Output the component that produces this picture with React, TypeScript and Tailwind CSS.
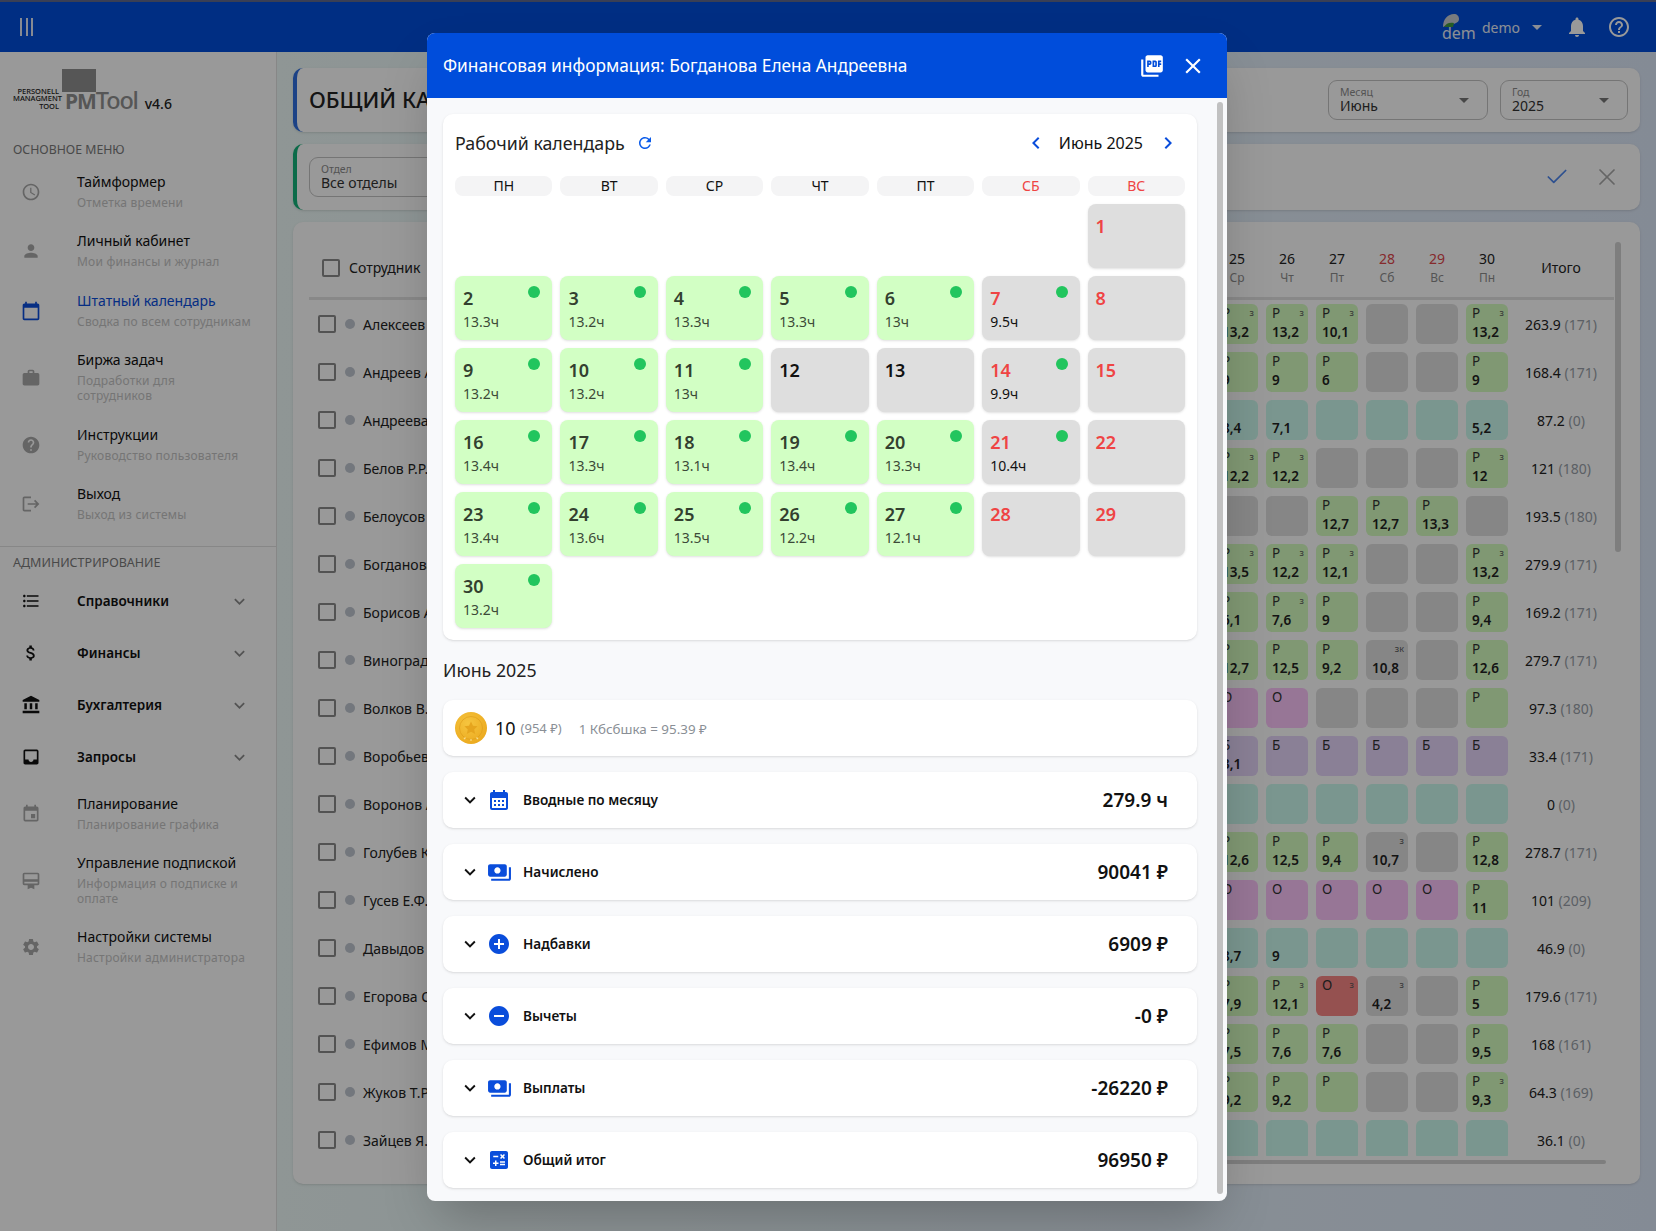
import type { ReactNode } from 'react';
import {
  MdAccessTime, MdPerson, MdCalendarToday, MdWork, MdHelp, MdLogout, MdFormatListBulleted, MdAttachMoney,
  MdAccountBalance, MdInbox, MdEvent, MdCardMembership, MdSettings, MdPictureAsPdf, MdClose, MdRefresh,
  MdChevronLeft, MdChevronRight, MdExpandMore, MdCalendarMonth, MdPayments, MdAddCircle, MdRemoveCircle,
  MdCalculate, MdArrowDropDown, MdNotifications, MdHelpOutline,
} from 'react-icons/md';
import { Check as CheckIcon, X } from 'lucide-react';

type Tone = 'g' | 'o' | 't' | 'p' | 'l' | 'r';
type Cell = [Tone, string?, string?, string?];

const toneClass: Record<Tone, string> = {
  g: 'bg-[#d5fdc0]',
  o: 'bg-[#e0e0e0]',
  t: 'bg-[#ccfbee]',
  p: 'bg-[#fcc5fb]',
  l: 'bg-[#e6d5fb]',
  r: 'bg-[#f98785]',
};

const off: Cell = ['o'];
const teal: Cell = ['t'];

const rows: { name: string; cells: Cell[]; total: string; norm: string }[] = [
  { name: 'Алексеев', cells: [['g', 'Р', '13,2', 'з'], ['g', 'Р', '13,2', 'з'], ['g', 'Р', '10,1', 'з'], off, off, ['g', 'Р', '13,2', 'з']], total: '263.9', norm: '(171)' },
  { name: 'Андреев А', cells: [['g', 'Р', '9'], ['g', 'Р', '9'], ['g', 'Р', '6'], off, off, ['g', 'Р', '9']], total: '168.4', norm: '(171)' },
  { name: 'Андреева', cells: [['t', '', '8,4'], ['t', '', '7,1'], teal, teal, teal, ['t', '', '5,2']], total: '87.2', norm: '(0)' },
  { name: 'Белов Р.Р.', cells: [['g', 'Р', '12,2', 'з'], ['g', 'Р', '12,2', 'з'], off, off, off, ['g', 'Р', '12', 'з']], total: '121', norm: '(180)' },
  { name: 'Белоусов', cells: [off, off, ['g', 'Р', '12,7'], ['g', 'Р', '12,7'], ['g', 'Р', '13,3'], off], total: '193.5', norm: '(180)' },
  { name: 'Богданова', cells: [['g', 'Р', '13,5', 'з'], ['g', 'Р', '12,2', 'з'], ['g', 'Р', '12,1', 'з'], off, off, ['g', 'Р', '13,2', 'з']], total: '279.9', norm: '(171)' },
  { name: 'Борисов А', cells: [['g', 'Р', '6,1'], ['g', 'Р', '7,6', 'з'], ['g', 'Р', '9'], off, off, ['g', 'Р', '9,4']], total: '169.2', norm: '(171)' },
  { name: 'Виноград', cells: [['g', 'Р', '12,7'], ['g', 'Р', '12,5'], ['g', 'Р', '9,2'], ['o', '', '10,8', 'зк'], off, ['g', 'Р', '12,6']], total: '279.7', norm: '(171)' },
  { name: 'Волков В.', cells: [['p', 'О'], ['p', 'О'], off, off, off, ['g', 'Р']], total: '97.3', norm: '(180)' },
  { name: 'Воробьев', cells: [['l', 'Б', '3,1'], ['l', 'Б'], ['l', 'Б'], ['l', 'Б'], ['l', 'Б'], ['l', 'Б']], total: '33.4', norm: '(171)' },
  { name: 'Воронов А', cells: [teal, teal, teal, teal, teal, teal], total: '0', norm: '(0)' },
  { name: 'Голубев К', cells: [['g', 'Р', '12,6'], ['g', 'Р', '12,5'], ['g', 'Р', '9,4'], ['o', '', '10,7', 'з'], off, ['g', 'Р', '12,8']], total: '278.7', norm: '(171)' },
  { name: 'Гусев Е.Ф.', cells: [['p', 'О'], ['p', 'О'], ['p', 'О'], ['p', 'О'], ['p', 'О'], ['g', 'Р', '11']], total: '101', norm: '(209)' },
  { name: 'Давыдов', cells: [['t', '', '8,7'], ['t', '', '9'], teal, teal, teal, teal], total: '46.9', norm: '(0)' },
  { name: 'Егорова С', cells: [['g', 'Р', '7,9'], ['g', 'Р', '12,1', 'з'], ['r', 'О', '', 'з'], ['o', '', '4,2', 'з'], off, ['g', 'Р', '5']], total: '179.6', norm: '(171)' },
  { name: 'Ефимов М', cells: [['g', 'Р', '7,5'], ['g', 'Р', '7,6'], ['g', 'Р', '7,6'], off, off, ['g', 'Р', '9,5']], total: '168', norm: '(161)' },
  { name: 'Жуков Т.Р', cells: [['g', 'Р', '9,2'], ['g', 'Р', '9,2'], ['g', 'Р'], off, off, ['g', 'Р', '9,3', 'з']], total: '64.3', norm: '(169)' },
  { name: 'Зайцев Я.', cells: [teal, teal, teal, teal, teal, teal], total: '36.1', norm: '(0)' },
];

const days = [
  ['25', 'Ср'], ['26', 'Чт'], ['27', 'Пт'], ['28', 'Сб'], ['29', 'Вс'], ['30', 'Пн'],
];

type CalDay = { d: number; h?: string; work?: boolean; dot?: boolean; red?: boolean };

const calendar: (CalDay | null)[] = [
  null, null, null, null, null, null, { d: 1, red: true },
  { d: 2, h: '13.3ч', work: true, dot: true }, { d: 3, h: '13.2ч', work: true, dot: true }, { d: 4, h: '13.3ч', work: true, dot: true }, { d: 5, h: '13.3ч', work: true, dot: true }, { d: 6, h: '13ч', work: true, dot: true }, { d: 7, h: '9.5ч', dot: true, red: true }, { d: 8, red: true },
  { d: 9, h: '13.2ч', work: true, dot: true }, { d: 10, h: '13.2ч', work: true, dot: true }, { d: 11, h: '13ч', work: true, dot: true }, { d: 12 }, { d: 13 }, { d: 14, h: '9.9ч', dot: true, red: true }, { d: 15, red: true },
  { d: 16, h: '13.4ч', work: true, dot: true }, { d: 17, h: '13.3ч', work: true, dot: true }, { d: 18, h: '13.1ч', work: true, dot: true }, { d: 19, h: '13.4ч', work: true, dot: true }, { d: 20, h: '13.3ч', work: true, dot: true }, { d: 21, h: '10.4ч', dot: true, red: true }, { d: 22, red: true },
  { d: 23, h: '13.4ч', work: true, dot: true }, { d: 24, h: '13.6ч', work: true, dot: true }, { d: 25, h: '13.5ч', work: true, dot: true }, { d: 26, h: '12.2ч', work: true, dot: true }, { d: 27, h: '12.1ч', work: true, dot: true }, { d: 28, red: true }, { d: 29, red: true },
  { d: 30, h: '13.2ч', work: true, dot: true },
];

const summary: { label: string; value: string; icon: ReactNode }[] = [
  { label: 'Вводные по месяцу', value: '279.9 ч', icon: <MdCalendarMonth size={24} /> },
  { label: 'Начислено', value: '90041 ₽', icon: <MdPayments size={25} /> },
  { label: 'Надбавки', value: '6909 ₽', icon: <MdAddCircle size={24} /> },
  { label: 'Вычеты', value: '-0 ₽', icon: <MdRemoveCircle size={24} /> },
  { label: 'Выплаты', value: '-26220 ₽', icon: <MdPayments size={25} /> },
  { label: 'Общий итог', value: '96950 ₽', icon: <MdCalculate size={24} /> },
];

function NavItem({ icon, title, sub, active, h = 'h-[59.5px]' }: { icon: ReactNode; title: string; sub: string[]; active?: boolean; h?: string }) {
  return (
    <div className={`flex items-center ${h}`}>
      <div className={`w-[77px] pl-[21px] ${active ? 'text-[#0a4ddb]' : 'text-[#a8a8a8]'}`}>{icon}</div>
      <div className="pb-[2px]">
        <div className={`text-[14px] leading-[20px] ${active ? 'text-[#0a4ddb]' : 'text-[#111]'}`}>{title}</div>
        <div className="mt-[4px] text-[12px] leading-[14.5px] tracking-[0.2px] text-[#c4c4c4]">
          {sub.map((s) => <div key={s}>{s}</div>)}
        </div>
      </div>
    </div>
  );
}

function NavGroup({ icon, title }: { icon: ReactNode; title: string }) {
  return (
    <div className="flex h-[52px] items-center pr-[26px]">
      <div className="w-[77px] pl-[21px] text-[#111]">{icon}</div>
      <div className="flex-1 text-[13.5px] font-semibold text-[#111]">{title}</div>
      <MdExpandMore size={21} className="text-[#8a8a8a]" />
    </div>
  );
}

function Sidebar() {
  return (
    <aside className="w-[277px] shrink-0 border-r border-[#e2e2e2] bg-white">
      <div className="relative h-[88px]">
        <div className="absolute left-[13px] top-[36px] w-[46px] text-right text-[7.5px] leading-[7.3px] font-medium text-[#222]">PERSONELL<br />MANAGMENT<br />TOOL</div>
        <div className="absolute left-[62px] top-[17px] h-[23px] w-[34px] bg-[#8f8f8f]" />
        <div className="absolute left-[65px] top-[34px] flex items-baseline text-[#8f8f8f]">
          <span className="text-[21px] leading-[28px] font-bold tracking-[-1px]">PM</span>
          <span className="text-[23.5px] leading-[28px] font-medium tracking-[-1.2px]">Tool</span>
          <span className="ml-[7px] text-[14px] font-medium text-[#222]">v4.6</span>
        </div>
      </div>
      <div className="px-[13px] pt-[1px] text-[12.3px] leading-[18px] text-[#7a7a7a]">ОСНОВНОЕ МЕНЮ</div>
      <div className="pt-[3px]">
        <NavItem icon={<MdAccessTime size={20} />} title="Таймформер" sub={['Отметка времени']} />
        <NavItem icon={<MdPerson size={20} />} title="Личный кабинет" sub={['Мои финансы и журнал']} />
        <NavItem icon={<MdCalendarToday size={20} />} title="Штатный календарь" sub={['Сводка по всем сотрудникам']} active />
        <NavItem icon={<MdWork size={20} />} title="Биржа задач" sub={['Подработки для', 'сотрудников']} h="h-[74.5px]" />
        <NavItem icon={<MdHelp size={20} />} title="Инструкции" sub={['Руководство пользователя']} />
        <NavItem icon={<MdLogout size={20} />} title="Выход" sub={['Выход из системы']} />
      </div>
      <div className="mt-[12px] border-t border-[#e2e2e2] px-[13px] pt-[7px] text-[12.5px] leading-[18px] text-[#7a7a7a]">АДМИНИСТРИРОВАНИЕ</div>
      <div className="pt-[3px]">
        <NavGroup icon={<MdFormatListBulleted size={20} />} title="Справочники" />
        <NavGroup icon={<MdAttachMoney size={20} />} title="Финансы" />
        <NavGroup icon={<MdAccountBalance size={20} />} title="Бухгалтерия" />
        <NavGroup icon={<MdInbox size={20} />} title="Запросы" />
      </div>
      <div className="pt-[1px]">
        <NavItem icon={<MdEvent size={20} />} title="Планирование" sub={['Планирование графика']} />
        <NavItem icon={<MdCardMembership size={20} />} title="Управление подпиской" sub={['Информация о подписке и', 'оплате']} h="h-[74px]" />
        <NavItem icon={<MdSettings size={20} />} title="Настройки системы" sub={['Настройки администратора']} />
      </div>
    </aside>
  );
}

function SelectBox({ label, value, w, caret = true }: { label: string; value: string; w: string; caret?: boolean }) {
  return (
    <div className={`flex h-[40px] items-center rounded-[9px] border border-[#c4c4c4] pl-[11px] pr-[11px] ${w}`}>
      <div className="flex-1 pb-[1px]">
        <div className="text-[10.5px] leading-[12px] text-[#8b8b8b]">{label}</div>
        <div className="text-[14px] leading-[16px] text-[#333]">{value}</div>
      </div>
      {caret && <MdArrowDropDown size={24} className="text-[#777]" />}
    </div>
  );
}

function DayCell({ cell }: { cell: Cell }) {
  const [tone, letter, num, badge] = cell;
  return (
    <div className={`relative h-10 w-[42px] shrink-0 rounded-[6px] pl-[6px] ${toneClass[tone]}`}>
      <div className="h-[18px] text-[13.5px] leading-[18px] text-[#333]">{letter}</div>
      <div className="mt-[1px] h-[18px] text-[13.5px] leading-[18px] font-semibold text-[#222]">{num}</div>
      {badge && <span className="absolute right-[4px] top-[2px] text-[9px] leading-[14px] text-[#555]">{badge}</span>}
    </div>
  );
}

function Check({ className }: { className: string }) {
  return <div className={`h-[18px] w-[18px] shrink-0 rounded-[2px] border-2 border-[#8a8a8a] ${className}`} />;
}

function TableCard() {
  return (
    <section className="mx-[16px] mt-[12px] flex h-[962px] rounded-[10px] bg-white pl-[16px] shadow-sm">
      <div className="w-[1305px] shrink-0">
        <div className="mt-[12px] h-[922px] overflow-hidden">
          <div className="flex h-[66px] items-center border-b-[3px] border-[#e3e3e3] pt-[4px]">
            <Check className="ml-[13px]" />
            <div className="ml-[9px] flex-1 text-[14px] text-[#222]">Сотрудник</div>
            <div className="flex gap-[8px]">
              {days.map(([d, w]) => (
                <div key={d} className="w-[42px] text-center">
                  <div className={`text-[14px] leading-[20px] ${d === '28' || d === '29' ? 'text-[#e0464a]' : 'text-[#222]'}`}>{d}</div>
                  <div className="text-[12px] leading-[18px] text-[#8d8d8d]">{w}</div>
                </div>
              ))}
            </div>
            <div className="w-[106px] text-center text-[14px] text-[#222]">Итого</div>
          </div>
          {rows.map((r) => (
            <div key={r.name} className="flex h-[48px] items-center">
              <Check className="ml-[9px]" />
              <div className="ml-[9px] h-[10px] w-[10px] rounded-full bg-[#c0c6d0]" />
              <div className="ml-[8px] flex-1 text-[14px] text-[#222]">{r.name}</div>
              <div className="flex gap-[8px]">
                {r.cells.map((c, i) => <DayCell key={i} cell={c} />)}
              </div>
              <div className="w-[106px] text-center text-[14px] text-[#222]">
                {r.total} <span className="text-[#999fa8]">{r.norm}</span>
              </div>
            </div>
          ))}
        </div>
        <div className="ml-auto mr-[8px] mt-[4px] h-[4px] w-[1000px] rounded-full bg-[#d2d2d2]" />
      </div>
      <div className="ml-[1px] mt-[20px] h-[310px] w-[6px] rounded-full bg-[#d2d2d2]" />
    </section>
  );
}

function Main() {
  return (
    <main className="min-w-0 flex-1 bg-gradient-to-r from-[#eefaf8] to-[#dde8f8] pt-[16px]">
      <section className="mx-[16px] flex h-[64px] items-center rounded-[10px] border-l-4 border-[#2f6fe0] bg-white pl-[12px] pr-[12px] shadow-sm">
        <div className="flex-1 pb-[2px] text-[22px] font-medium text-[#222]">ОБЩИЙ КАЛЕНДАРЬ</div>
        <div className="flex gap-[12px]">
          <SelectBox label="Месяц" value="Июнь" w="w-[160px]" />
          <SelectBox label="Год" value="2025" w="w-[128px]" />
        </div>
      </section>
      <section className="mx-[16px] mt-[12px] flex h-[66px] items-center rounded-[10px] border-l-4 border-[#13b27a] bg-white pl-[12px] pr-[19px] shadow-sm">
        <SelectBox label="Отдел" value="Все отделы" w="w-[200px]" caret={false} />
        <div className="flex-1" />
        <CheckIcon size={26} strokeWidth={1.6} className="text-[#4d86ee]" />
        <X size={28} strokeWidth={1.5} className="ml-[23px] text-[#a8a8a8]" />
      </section>
      <TableCard />
    </main>
  );
}

function Coin() {
  return (
    <svg width="32" height="32" viewBox="0 0 32 32">
      <defs>
        <radialGradient id="coin" cx="40%" cy="35%" r="70%">
          <stop offset="0%" stopColor="#f6c53f" />
          <stop offset="100%" stopColor="#eba91e" />
        </radialGradient>
      </defs>
      <circle cx="16" cy="16" r="16" fill="url(#coin)" />
      <circle cx="16" cy="16" r="11.5" fill="none" stroke="#dc9a18" strokeWidth="1" opacity="0.6" />
      <path d="M16 9.5l2 4.3 4.6.5-3.4 3.2 1 4.6-4.2-2.4-4.2 2.4 1-4.6-3.4-3.2 4.6-.5z" fill="#e6a51e" />
      <path d="M9 27l1.5-1.5M16 29v-2M23 27l-1.5-1.5" stroke="#f9dd8d" strokeWidth="1.2" />
    </svg>
  );
}

function Modal() {
  return (
    <div className="absolute left-[427px] top-[33px] flex h-[1168px] w-[800px] flex-col overflow-hidden rounded-[8px] bg-[#f8f9fb] shadow-2xl">
      <header className="flex h-[65px] shrink-0 items-center bg-[#004ddb] pl-[16px] pr-[21px] text-white">
        <div className="flex-1 text-[17.3px]">Финансовая информация: Богданова Елена Андреевна</div>
        <MdPictureAsPdf size={26} />
        <MdClose size={26} className="ml-[15px]" />
      </header>
      <div className="flex min-h-0 flex-1">
        <div className="w-[790px] shrink-0 pl-[16px] pr-[20px] pt-[16px]">
          <div className="h-[526px] rounded-[10px] bg-white px-[12px] pt-[12px] shadow-sm">
            <div className="flex h-[34px] items-center">
              <span className="text-[17.8px] text-[#222]">Рабочий календарь</span>
              <MdRefresh size={18} className="ml-[11px] text-[#0a5bea]" />
              <div className="flex-1" />
              <MdChevronLeft size={24} className="text-[#0a4ddb]" />
              <span className="ml-[11px] mr-[13px] text-[16px] text-[#111]">Июнь 2025</span>
              <MdChevronRight size={24} className="mr-[5px] text-[#0a4ddb]" />
            </div>
            <div className="mt-[16px] grid grid-cols-7 gap-[8px]">
              {['ПН', 'ВТ', 'СР', 'ЧТ', 'ПТ', 'СБ', 'ВС'].map((d, i) => (
                <div key={d} className={`h-[20px] rounded-[8px] bg-[#f4f4f5] text-center text-[14px] leading-[20px] ${i > 4 ? 'text-[#ef4444]' : 'text-[#111]'}`}>{d}</div>
              ))}
              {calendar.map((c, i) => c ? (
                <div key={i} className={`relative h-[64px] rounded-[8px] pl-[8px] shadow-sm ${c.work ? 'bg-[#d2ffc4]' : 'bg-[#dedede]'}`}>
                  <div className={`pt-[10px] text-[18px] leading-[24px] font-semibold ${c.red ? 'text-[#ef4444]' : c.work ? 'text-[#33402f]' : 'text-[#111]'}`}>{c.d}</div>
                  {c.h && <div className={`mt-[3px] text-[14px] leading-[18px] ${c.work ? 'text-[#3c4a38]' : 'text-[#111]'}`}>{c.h}</div>}
                  {c.dot && <span className="absolute right-[12px] top-[10px] h-[12px] w-[12px] rounded-full bg-[#22c55e]" />}
                </div>
              ) : <div key={i} className="h-[64px]" />)}
            </div>
          </div>
          <div className="pt-[16px] text-[17.8px] leading-[28px] text-[#222]">Июнь 2025</div>
          <div className="mt-[16px] flex h-[56px] items-center rounded-[10px] bg-white pl-[12px] shadow-sm">
            <Coin />
            <span className="ml-[8px] text-[18px] text-[#111]">10</span>
            <span className="ml-[5px] pt-[2px] text-[13px] text-[#8a8f96]">(954 ₽)</span>
            <span className="ml-[17px] pt-[2px] text-[13.4px] text-[#8a8f96]">1 Кбсбшка = 95.39 ₽</span>
          </div>
          {summary.map((s) => (
            <div key={s.label} className="mt-[16px] flex h-[56px] items-center rounded-[10px] bg-white pl-[16px] pr-[29px] shadow-sm">
              <MdExpandMore size={22} className="text-[#111]" />
              <div className="flex w-[36px] justify-center text-[#0a4ddb]">{s.icon}</div>
              <div className="ml-[6px] flex-1 text-[13.6px] font-semibold text-[#111]">{s.label}</div>
              <div className="text-[19px] font-semibold text-[#111]">{s.value}</div>
            </div>
          ))}
        </div>
        <div className="mt-[4px] h-[1092px] w-[6px] rounded-full bg-[#c1c1c1]" />
      </div>
    </div>
  );
}

export default function App() {
  return (
    <div className="relative flex h-[1231px] w-[1656px] flex-col overflow-hidden font-['Noto_Sans','Liberation_Sans',sans-serif]">
      <div className="h-[2px] shrink-0 bg-[#616a8e]" />
      <header className="flex h-[50px] shrink-0 items-center bg-[#004ddb] pl-[20px] pr-[25px] text-white shadow-md">
        <div className="flex gap-[3.5px]">
          <span className="h-[18px] w-[2px] bg-[#dfe6f5]" />
          <span className="h-[18px] w-[2px] bg-[#dfe6f5]" />
          <span className="h-[18px] w-[2px] bg-[#dfe6f5]" />
        </div>
        <div className="flex-1" />
        <div className="relative h-[28px] w-[32px]">
          <svg width="18" height="16" viewBox="0 0 18 16" className="absolute left-0 top-0">
            <path d="M1 14C1 6 6 1 12 1c3 0 5 2 5 5 0 3-3 4-5 5-3 1-7 1-11 3z" fill="#c9cdd2" />
            <path d="M2 14c2-4 6-5 10-4l-1 4z" fill="#3f9a3f" />
          </svg>
          <span className="absolute left-0 top-[10px] text-[16px] leading-[20px] text-[#e8edf8]">dem</span>
        </div>
        <span className="ml-[8px] text-[14px] text-[#e8edf8]">demo</span>
        <MdArrowDropDown size={24} className="ml-[5px] text-[#e8edf8]" />
        <MdNotifications size={24} className="ml-[16px]" />
        <MdHelpOutline size={24} className="ml-[18px]" />
      </header>
      <div className="flex min-h-0 flex-1">
        <Sidebar />
        <Main />
      </div>
      <div className="absolute inset-0 bg-black/40" />
      <Modal />
    </div>
  );
}
